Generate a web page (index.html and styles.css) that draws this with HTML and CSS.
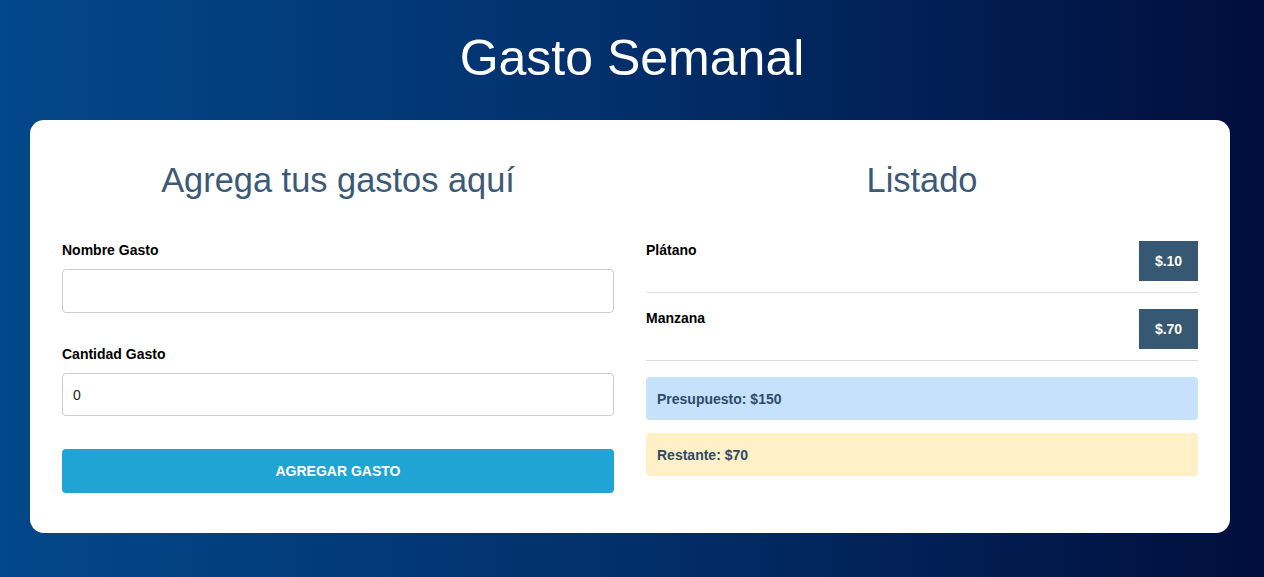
FILE: index.html
```html
<!DOCTYPE html>
<html lang="es">
<head>
<meta charset="utf-8">
<title>Gasto Semanal</title>
<link rel="stylesheet" href="styles.css">
</head>
<body>
  <header class="site-header">
    <h1 class="site-title">Gasto Semanal</h1>
  </header>
  <main class="card">
    <section class="column">
      <h2 class="column-title">Agrega tus gastos aquí</h2>
      <form class="expense-form">
        <div class="field">
          <label class="field-label" for="nombre">Nombre Gasto</label>
          <input class="field-input" id="nombre" type="text">
        </div>
        <div class="field">
          <label class="field-label" for="cantidad">Cantidad Gasto</label>
          <input class="field-input field-input-short" id="cantidad" type="number" value="0">
        </div>
        <button class="submit-btn" type="button">AGREGAR GASTO</button>
      </form>
    </section>
    <section class="column">
      <h2 class="column-title">Listado</h2>
      <ul class="expense-list">
        <li class="expense-item">
          <span class="expense-name">Plátano</span>
          <span class="expense-amount">$.10</span>
        </li>
        <li class="expense-item">
          <span class="expense-name">Manzana</span>
          <span class="expense-amount">$.70</span>
        </li>
      </ul>
      <div class="alert alert-budget">Presupuesto: $150</div>
      <div class="alert alert-remaining">Restante: $70</div>
    </section>
  </main>
</body>
</html>
```
FILE: styles.css
```css
* {
  box-sizing: border-box;
}

html, body {
  margin: 0;
  padding: 0;
}

body {
  min-height: 577px;
  font-family: "Liberation Sans", Arial, sans-serif;
  background: linear-gradient(to right, #03488b 0%, #022f6a 50%, #010e3c 100%);
  padding: 0 30px 44px;
}

.site-header {
  height: 120px;
  display: flex;
  align-items: center;
  justify-content: center;
}

.site-title {
  margin: 0;
  color: #ffffff;
  font-size: 50px;
  font-weight: 400;
  line-height: 1;
  padding-bottom: 4px;
}

.card {
  width: 1200px;
  background: #ffffff;
  border-radius: 14px;
  padding: 32px 32px 40px;
  display: grid;
  grid-template-columns: 1fr 1fr;
  column-gap: 32px;
}

.column-title {
  margin: 8px 0 42px;
  text-align: center;
  color: #3b5a78;
  font-size: 34.4px;
  font-weight: 400;
  line-height: 40px;
}

.expense-form {
  display: flex;
  flex-direction: column;
}

.field {
  display: flex;
  flex-direction: column;
  margin-bottom: 33px;
}

.field-label {
  font-size: 14px;
  font-weight: 700;
  color: #000000;
  line-height: 16px;
  margin-bottom: 11px;
}

.field-input {
  height: 44px;
  border: 1px solid #cccccc;
  border-radius: 4px;
  padding: 0 10px;
  font-family: "Liberation Sans", Arial, sans-serif;
  font-size: 14px;
  color: #222222;
}

.field-input-short {
  height: 43px;
}

.submit-btn {
  height: 44px;
  border: none;
  border-radius: 4px;
  background: #1fa4d4;
  color: #ffffff;
  font-family: "Liberation Sans", Arial, sans-serif;
  font-size: 14px;
  font-weight: 700;
}

.expense-list {
  list-style: none;
  margin: -1px 0 0;
  padding: 0;
}

.expense-item {
  display: flex;
  justify-content: space-between;
  align-items: flex-start;
  border-bottom: 1px solid #dddddd;
  padding: 0 0 11px;
  margin-bottom: 16px;
}

.expense-name {
  font-size: 14px;
  font-weight: 700;
  color: #000000;
  line-height: 16px;
  padding-top: 1px;
}

.expense-amount {
  background: #365873;
  color: #ffffff;
  font-size: 14px;
  font-weight: 700;
  width: 59px;
  height: 40px;
  display: flex;
  align-items: center;
  justify-content: center;
}

.alert {
  height: 43px;
  border-radius: 4px;
  padding: 0 11px;
  display: flex;
  align-items: center;
  font-size: 14px;
  font-weight: 700;
  color: #2f4a66;
  margin-bottom: 13px;
}

.alert-budget {
  background: #c6e1fc;
}

.alert-remaining {
  background: #fff0c8;
}
```
